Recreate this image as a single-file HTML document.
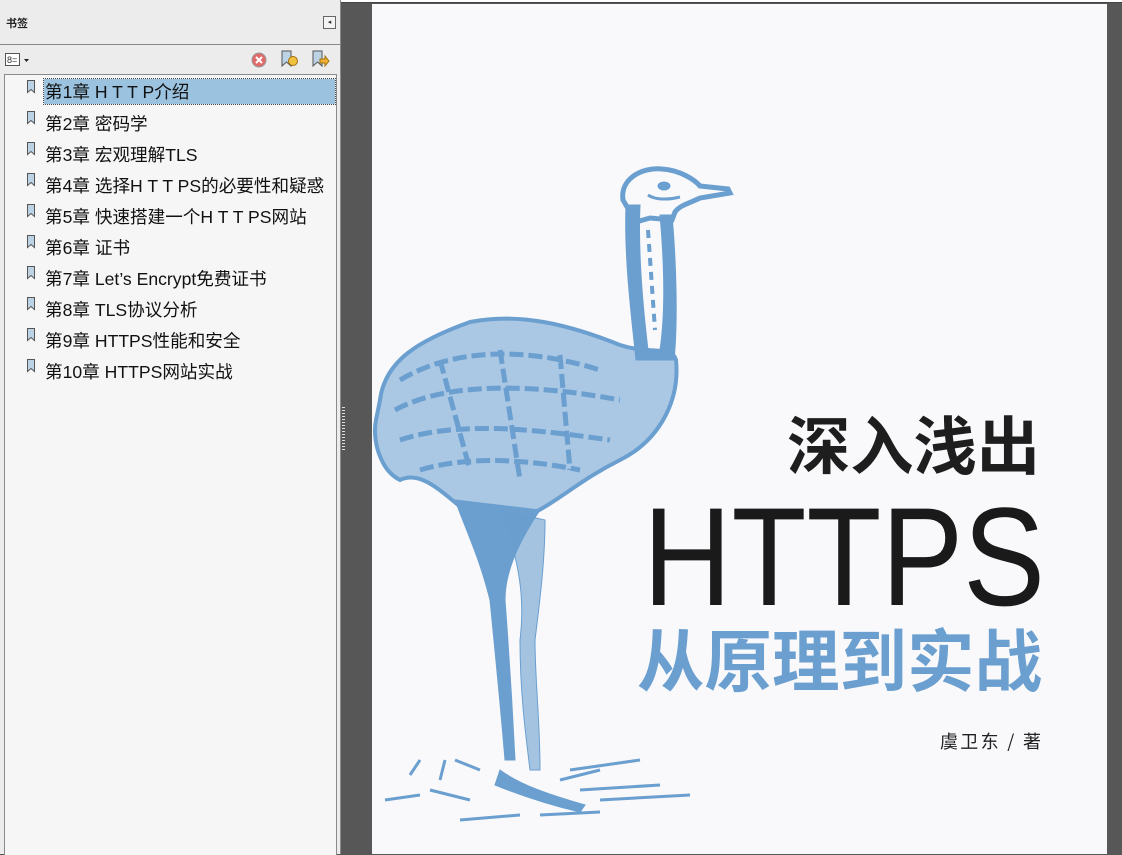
<!DOCTYPE html>
<html><head><meta charset="utf-8"><style>
body{margin:0;width:1122px;height:854px;overflow:hidden;position:relative;background:#575757;font-family:"Liberation Sans","Noto Sans CJK SC",sans-serif}
#left{position:absolute;left:0;top:0;width:340px;height:854px;background:#ececec;border-right:1px solid #8a8a8a}
#topline{position:absolute;left:0;top:0;width:1122px;height:2px;background:#fff;border-bottom:1px solid #444}
.hdr{position:absolute;left:6px;top:15px;font-size:11px;font-weight:bold;color:#222}
.coll{position:absolute;left:323px;top:16px;width:11px;height:11px;border:1px solid #666;background:#f4f4f4;font-size:7px;line-height:11px;text-align:center;color:#333}
.sep{position:absolute;left:0;top:44px;width:340px;height:1px;background:#888}
#list{position:absolute;left:4px;top:74px;width:331px;height:780px;background:#f6f6f6;border:1px solid #8a8a8a;border-bottom:none}
.item{position:absolute;left:40px;height:25px;line-height:26px;font-size:17.6px;color:#111;white-space:nowrap;padding-left:1px;letter-spacing:0}
.sel{background:#9bc2de;outline:1px dotted #444;width:290px}
#page{position:absolute;left:372px;top:4px;width:735px;height:850px;background:#f9f9fc}
#grip{position:absolute;left:342px;top:407px;width:3px;height:45px;background:repeating-linear-gradient(#ddd 0 1px,transparent 1px 3px)}
</style></head><body>
<div id="topline"></div>
<div id="left">
<div class="hdr">书签</div>
<div class="coll">◂</div>
<div class="sep"></div>
<svg style="position:absolute;left:5px;top:52px" width="28" height="16"><rect x="0.5" y="1.5" width="14" height="12" fill="#fff" stroke="#555"/><text x="2" y="11" font-size="9" fill="#333">8=</text><path d="M19 7h5l-2.5 3z" fill="#222"/></svg>
<svg style="position:absolute;left:250px;top:51px" width="18" height="18"><circle cx="9" cy="9" r="7" fill="#e06a6a" stroke="#999"/><path d="M6 6l6 6M12 6l-6 6" stroke="#fff" stroke-width="2"/></svg>
<svg style="position:absolute;left:281px;top:50px" width="18" height="18"><path d="M1 1h9v15l-4.5-4-4.5 4z" fill="#bcd3e6" stroke="#555"/><circle cx="12" cy="11" r="4.5" fill="#f0c040" stroke="#a07010"/></svg>
<svg style="position:absolute;left:312px;top:50px" width="18" height="18"><path d="M1 1h9v15l-4.5-4-4.5 4z" fill="#bcd3e6" stroke="#555"/><path d="M8 9h5v-3l4 5-4 5v-3h-5z" fill="#f0b030" stroke="#a07010"/></svg>
<div id="list"></div>
</div>
<div id="grip"></div>
<div id="page"></div>

<svg style="position:absolute;left:0;top:0" width="1122" height="854">
<defs><g id="bm"><path d="M0.5 0.5h7v12l-3.5-3-3.5 3z" fill="#bcd3e6" stroke="#555"/></g></defs>
<use href="#bm" x="27" y="80"/><use href="#bm" x="27" y="111"/><use href="#bm" x="27" y="142"/><use href="#bm" x="27" y="173"/><use href="#bm" x="27" y="204"/><use href="#bm" x="27" y="235"/><use href="#bm" x="27" y="266"/><use href="#bm" x="27" y="297"/><use href="#bm" x="27" y="328"/><use href="#bm" x="27" y="359"/>
<g fill="#6a9fcf" stroke="#6a9fcf">
<path d="M623 200 C620 180 640 167 662 169 C680 170 695 180 700 186 L728 189 L730 193 L700 198 C690 203 680 205 675 212 L672 220 L650 218 L636 222 Z" fill="none" stroke-width="5"/>
<ellipse cx="664" cy="186" rx="6" ry="4"/>
<path d="M648 195 C655 200 668 200 680 197" fill="none" stroke-width="3"/>
<path d="M626 205 C624 260 632 320 636 360 L674 360 C678 320 676 260 672 215 L660 215 C664 260 666 310 660 350 L648 350 C642 300 638 250 640 205 Z"/>
<path d="M648 230 L655 330" stroke-width="4" fill="none" stroke-dasharray="8 6"/>
<path d="M380 400 C385 360 420 340 470 322 C520 312 570 325 620 345 C650 355 672 345 676 360 C680 400 660 440 620 460 C580 480 560 500 530 515 L470 515 C440 490 420 470 400 480 C380 470 372 440 376 420 Z" fill-opacity="0.55" stroke-width="4"/>
<path d="M400 380 C450 350 520 345 600 370 M395 410 C450 380 540 385 620 400 M400 440 C460 420 540 430 610 440 M420 470 C470 455 530 460 580 470 M440 360 L470 470 M500 350 L520 480 M560 355 L570 470" fill="none" stroke-width="5" stroke-dasharray="14 5"/>
<path d="M455 500 C470 540 480 560 490 600 C495 650 500 700 505 760 L515 760 C512 700 508 640 505 600 C505 570 520 540 540 510 Z"/>
<path d="M500 510 C520 560 525 600 520 640 C520 690 525 730 530 770 L540 770 C540 720 535 680 535 640 C540 600 545 560 545 520 Z" fill-opacity="0.6"/>
<path d="M500 770 C520 785 550 795 585 805 L580 812 C550 805 520 795 495 785 Z"/>
<path d="M385 800 L420 795 M430 790 L470 800 M410 775 L420 760 M440 780 L445 760 M560 780 L600 770 M570 770 L640 760 M580 790 L660 785 M600 800 L690 795 M460 820 L520 815 M540 815 L600 812 M455 760 L480 770" stroke-width="3" fill="none"/>
</g>
<text x="787" y="469" font-size="63" font-weight="bold" fill="#1e1e1e" font-family="Noto Sans CJK SC,sans-serif" textLength="253" lengthAdjust="spacingAndGlyphs">深入浅出</text>
<text x="643" y="605" font-size="140" fill="#1a1a1a" font-family="Liberation Sans,sans-serif" textLength="402" lengthAdjust="spacingAndGlyphs">HTTPS</text>
<text x="637" y="686" font-size="68" font-weight="bold" fill="#6a9fcf" font-family="Noto Sans CJK SC,sans-serif" textLength="405" lengthAdjust="spacingAndGlyphs">从原理到实战</text>
<text x="940" y="748" font-size="18" fill="#222" font-family="Noto Sans CJK SC,sans-serif" textLength="101" lengthAdjust="spacing">虞卫东 / 著</text>
</svg>
<div class="item sel" style="top:79px;left:44px">第1章 H T T P介绍</div>
<div class="item" style="top:111px;left:44px">第2章 密码学</div>
<div class="item" style="top:142px;left:44px">第3章 宏观理解TLS</div>
<div class="item" style="top:173px;left:44px">第4章 选择H T T PS的必要性和疑惑</div>
<div class="item" style="top:204px;left:44px">第5章 快速搭建一个H T T PS网站</div>
<div class="item" style="top:235px;left:44px">第6章 证书</div>
<div class="item" style="top:266px;left:44px">第7章 Let’s Encrypt免费证书</div>
<div class="item" style="top:297px;left:44px">第8章 TLS协议分析</div>
<div class="item" style="top:328px;left:44px">第9章 HTTPS性能和安全</div>
<div class="item" style="top:359px;left:44px">第10章 HTTPS网站实战</div>
</body></html>
